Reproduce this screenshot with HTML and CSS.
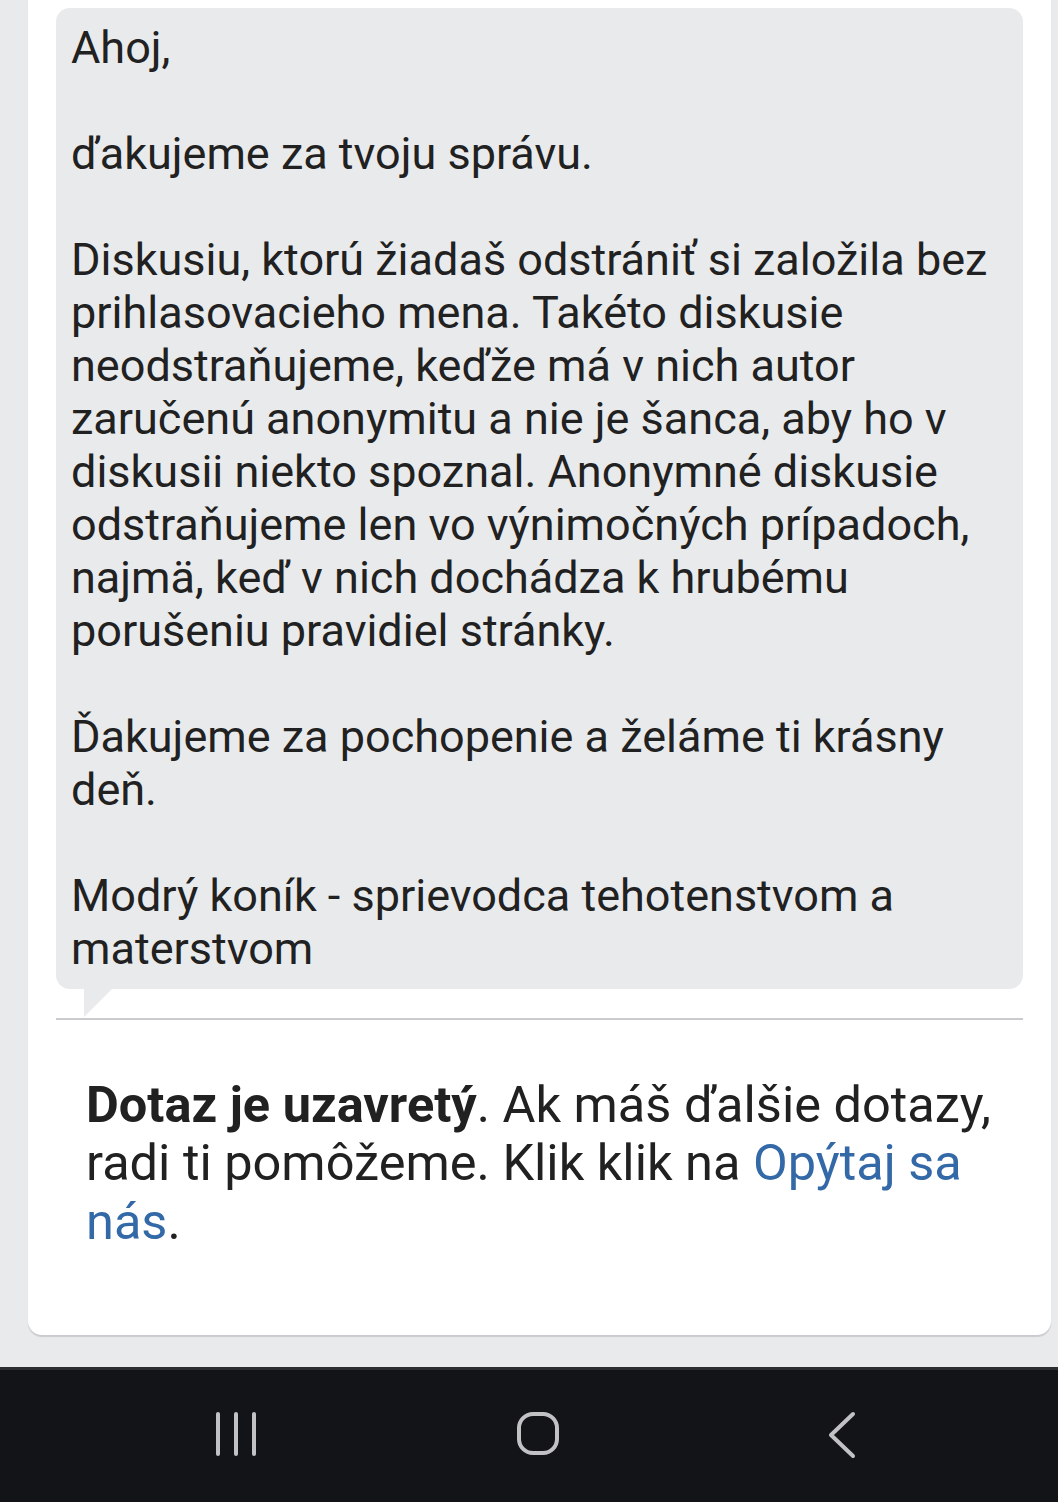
FILE: index.html
```html
<!DOCTYPE html>
<html lang="sk">
<head>
<meta charset="utf-8">
<link rel="stylesheet" href="styles.css">
</head>
<body>
<div class="screen">
  <div class="content">
    <div class="card">
      <div class="bubble">
        <p>Ahoj,</p>
        <p>ďakujeme za tvoju správu.</p>
        <p>Diskusiu, ktorú žiadaš odstrániť si založila bez prihlasovacieho mena. Takéto diskusie neodstraňujeme, keďže má v nich autor zaručenú anonymitu a nie je šanca, aby ho v diskusii niekto spoznal. Anonymné diskusie odstraňujeme len vo výnimočných prípadoch, najmä, keď v nich dochádza k hrubému porušeniu pravidiel stránky.</p>
        <p>Ďakujeme za pochopenie a želáme ti krásny deň.</p>
        <p>Modrý koník - sprievodca tehotenstvom a materstvom</p>
      </div>
      <div class="tail"></div>
      <div class="divider"></div>
      <p class="closed"><b>Dotaz je uzavretý</b>. Ak máš ďalšie dotazy, radi ti pomôžeme. Klik klik na <a href="#">Opýtaj sa nás</a>.</p>
    </div>
  </div>
  <nav class="navbar">
    <svg class="nav-icon" width="60" height="60" viewBox="0 0 60 60"><g stroke="#c2c2c4" stroke-width="4" stroke-linecap="round"><line x1="12" y1="10" x2="12" y2="50"/><line x1="30" y1="10" x2="30" y2="50"/><line x1="48" y1="10" x2="48" y2="50"/></g></svg>
    <svg class="nav-icon" width="60" height="60" viewBox="0 0 60 60"><rect x="10" y="10" width="38" height="39" rx="14" fill="none" stroke="#c2c2c4" stroke-width="4"/></svg>
    <svg class="nav-icon" width="60" height="60" viewBox="0 0 60 60"><polyline points="42,10 20,31 42,52" fill="none" stroke="#c2c2c4" stroke-width="4" stroke-linecap="round" stroke-linejoin="round"/></svg>
  </nav>
</div>
</body>
</html>
```
FILE: styles.css
```css
* { box-sizing: border-box; }
html, body { margin: 0; padding: 0; }
body {
  width: 1058px;
  height: 1502px;
  overflow: hidden;
  background: #e9eaec;
  font-family: Roboto, "Noto Sans", sans-serif;
  color: #212121;
}
.screen {
  display: flex;
  flex-direction: column;
  height: 1502px;
}
.content {
  flex: 1;
  min-height: 0;
  padding: 0 7px 32px 28px;
  display: flex;
  flex-direction: column;
}
.card {
  flex: 1;
  display: flex;
  flex-direction: column;
  justify-content: flex-end;
  background: #fff;
  border-radius: 0 0 14px 14px;
  box-shadow: 0 2px 1px #c9cbd0;
  padding: 7px 28px 84px 28px;
}
.bubble {
  background: #e9eaec;
  border-radius: 14px;
  padding: 13px 20px 14px 15px;
  font-size: 45px;
  line-height: 53px;
}
.bubble p { margin: 0 0 53px 0; }
.bubble p:last-child { margin-bottom: 0; }
.tail {
  flex: none;
  width: 0;
  height: 0;
  margin-left: 28px;
  border-top: 28px solid #e9eaec;
  border-right: 28px solid transparent;
}
.divider {
  flex: none;
  height: 2px;
  background: #c9cbce;
  margin-top: 1px;
}
.closed {
  margin: 56px 0 0 30px;
  font-size: 50.5px;
  line-height: 58.5px;
}
.closed b { font-weight: 700; }
.closed a { color: #3469a8; text-decoration: none; }
.navbar {
  flex: none;
  height: 135px;
  background: #131418;
  border-top: 3px solid #2b2d31;
  display: flex;
  align-items: center;
  padding: 0 0 4px 206px;
}
.nav-icon { display: block; }
.nav-icon:nth-child(2) { margin-left: 243px; }
.nav-icon:nth-child(3) { margin-left: 242px; }
```
